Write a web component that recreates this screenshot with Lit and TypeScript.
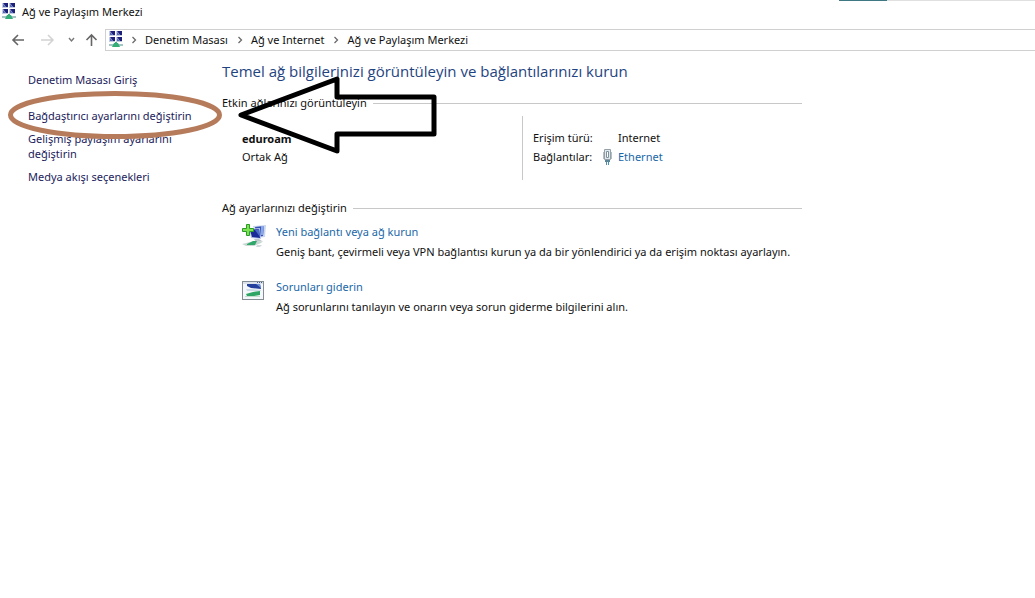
import { LitElement, html, css, svg } from "lit";
import { customElement } from "lit/decorators.js";

const networkIcon = html`<svg class="net" width="16" height="18" viewBox="0 0 16 18" aria-hidden="true">
  ${[[1, 0], [8, 0], [1, 6], [8, 6]].map(
    ([x, y]) => svg`<rect x=${x} y=${y} width="6" height="5" fill="#c3cbe2"/>
      <path d="M${x + 1} ${y}h5v4h-2z" fill="#1d2079"/><path d="M${x + 1} ${y + 1}l3 3h-3z" fill="#5468b4"/>`
  )}
  <path d="M7 11h2v2H7z" fill="#46a884"/>
  <path d="M1 13h14v2H1z" fill="#a3c6c2"/>
  <path d="M6 12h4l2 4H4z" fill="#35ad78"/>
</svg>`;

const newConnectionIcon = html`<svg width="24" height="26" viewBox="0 0 24 26" aria-hidden="true">
  <path d="M11 3l13-1-1 12-8 1z" fill="#cbd7ee"/>
  <path d="M13 4l9-1-1 10-6 1z" fill="#3650b5"/>
  <path d="M19 3l3 0-1 9-2 0z" fill="#8ba8e6"/>
  <path d="M7 6l11-1 1 11-10-1z" fill="#b9c7e8"/>
  <path d="M8 7l9-1 1 9-8-1z" fill="#1a2b98"/>
  <path d="M13 7l4-1 1 8z" fill="#4a6bca"/>
  <path d="M12 16l5 0 3 2-6 1z" fill="#bcc5cc"/>
  <path d="M0 21l8-2 13-1-2 2-7 3-8 0z" fill="#c9d7d2"/>
  <path d="M5 21l6-3 4 0-2 4-8 0z" fill="#30a86b"/>
  <path d="M15 22l5 0-2 2h-4z" fill="#d3d9de"/>
  <path d="M4.500 1.500h3v4h4v3h-4v4h-3v-4h-4v-3h4z" fill="#7ee255" stroke="#2c9a26"/>
</svg>`;

const troubleshootIcon = html`<svg width="24" height="20" viewBox="0 0 24 20" aria-hidden="true">
  <rect x="0.500" y="0.500" width="21" height="18" fill="#f5f8fa" stroke="#858d94"/>
  <path d="M1 1h20v2H1z" fill="#dbe2ea"/>
  <path d="M15 1h1v1h-1zM17 1h1v1h-1zM19 1h1v1h-1z" fill="#4a5a8c"/>
  <path d="M5 3h13l1 5-10-1-4-2z" fill="#24409c"/>
  <path d="M14 3h4l1 4z" fill="#6f91d8"/>
  <path d="M4 8l5 0 10 1v1H5z" fill="#cfdbe8"/>
  <path d="M4 13l7-2 7-1 0 4-6 1-7 0z" fill="#2fa565"/>
  <path d="M3 15h15v1H3z" fill="#c4ddd0"/>
</svg>`;

const ethernetIcon = html`<svg width="9" height="16" viewBox="0 0 9 16" aria-hidden="true">
  <path d="M1.500 0.500h6v10h-6z" fill="#dfe8ec" stroke="#94a1a8"/>
  <path d="M0 3h1v7H0zM8 3h1v7H8z" fill="#b4bfc4"/>
  <path d="M3.500 2.500h2v6h-2z" fill="#fff" stroke="#7d919b"/>
  <path d="M2 11h5v2H2z" fill="#5b8699"/>
  <path d="M3 13h1v3H3zM5 13h1v3H5z" fill="#4b90ad"/>
</svg>`;

const chevron = html`<svg class="chevron" width="6" height="8" viewBox="0 0 6 8" aria-hidden="true">
  <path d="M1.500 1l3 3-3 3" fill="none" stroke="#6a6a6a" stroke-width="1.300"/>
</svg>`;

@customElement("app-root")
export class AppRoot extends LitElement {
  static styles = css`
    :host {
      display: block;
      position: relative;
      min-height: 100vh;
      overflow: hidden;
      background: #fff;
      color: #111;
      font: 11px/16px "Noto Sans", "Open Sans", sans-serif;
    }
    * { box-sizing: border-box; }
    svg { display: block; flex: none; }
    a { color: inherit; text-decoration: none; }
    a:hover { text-decoration: underline; }
    h1, h2, p, dl, dd, dt, ul, ol { margin: 0; padding: 0; font: inherit; list-style: none; }
    .edge {
      position: absolute;
      top: 0;
      right: 0;
      width: 196px;
      height: 1px;
      background: #e0e0e0;
    }
    .edge::before { content: ""; display: block; width: 48px; height: 1px; background: #3f7783; }
    .titlebar { display: flex; align-items: center; gap: 5px; height: 24px; padding-left: 1px; }
    .nav { display: flex; height: 32px; padding-top: 5px; }
    .buttons { display: flex; align-items: center; width: 105px; height: 22px; padding-left: 11px; }
    button { border: 0; padding: 0; background: none; display: grid; place-items: center; height: 22px; }
    .wide { width: 15px; }
    .fwd { margin-left: 14px; }
    .drop { width: 9px; margin-left: 12px; }
    .up { margin-left: 8px; }
    .address {
      display: flex;
      flex: 1;
      align-items: center;
      height: 22px;
      padding-left: 2px;
      border: 1px solid #d0d0d0;
      border-right: 0;
    }
    .crumbs, .crumb { display: flex; align-items: center; }
    .crumbs { gap: 2px; }
    .chevron { margin: 0 8px 0 7px; }
    .page { display: grid; grid-template-columns: 222px minmax(0, 580px); padding-top: 4px; }
    .side { padding: 12px 24px 0 28px; color: #1c1c5c; line-height: 15px; }
    .side ul { display: grid; gap: 8px; }
    .home { padding-bottom: 13px; }
    h1 { color: #1f4480; font: 15px/22px "Open Sans", "Noto Sans", sans-serif; }
    h2 { display: flex; align-items: center; gap: 6px; }
    h2::after { content: ""; flex: 1; height: 1px; background: #c8c8c8; }
    .first { margin-top: 13px; }
    .network { display: grid; grid-template-columns: 300px 1fr; margin: 5px 0 20px; height: 64px; }
    .name { padding: 14px 0 0 20px; line-height: 18px; }
    .name strong { display: block; }
    .details { padding: 12px 0 0 10px; border-left: 1px solid #c8c8c8; }
    .row { display: grid; grid-template-columns: 70px 15px 1fr; line-height: 19px; align-items: center; }
    .row dd { grid-column: 3; }
    .row .linked { grid-column: 2 / 4; display: flex; gap: 6px; align-items: center; }
    .link { color: #1a67a8; }
    .tasks { display: grid; gap: 15px; padding: 6px 0 0 20px; }
    .task { display: grid; grid-template-columns: 34px 1fr; line-height: 20px; }
    .art { height: 26px; padding-top: 1px; }
    .art.low { padding-top: 4px; }
    .marks { position: absolute; top: 0; left: 0; pointer-events: none; }
  `;

  render() {
    return html`
      <div class="edge"></div>
      <header class="titlebar">${networkIcon}<span>Ağ ve Paylaşım Merkezi</span></header>
      <nav class="nav">
        <div class="buttons">
          <button class="wide" aria-label="Geri">
            <svg width="15" height="12" viewBox="0 0 15 12"><path d="M13 6H2M7 1L2 6l5 5" fill="none" stroke="#666" stroke-width="1.600"/></svg>
          </button>
          <button class="wide fwd" aria-label="İleri" disabled>
            <svg width="15" height="12" viewBox="0 0 15 12"><path d="M1 6h11M8 1l5 5-5 5" fill="none" stroke="#d2d2d2" stroke-width="1.500"/></svg>
          </button>
          <button class="drop" aria-label="Son konumlar">
            <svg width="9" height="6" viewBox="0 0 9 6"><path d="M2 1l2.500 3L7 1" fill="none" stroke="#777" stroke-width="1.400"/></svg>
          </button>
          <button class="wide up" aria-label="Yukarı">
            <svg width="13" height="14" viewBox="0 0 13 14"><path d="M6.500 13V2M1.500 7l5-5 5 5" fill="none" stroke="#666" stroke-width="1.600"/></svg>
          </button>
        </div>
        <div class="address">
          ${networkIcon}
          <ol class="crumbs">
            ${["Denetim Masası", "Ağ ve Internet", "Ağ ve Paylaşım Merkezi"].map(
              (name) => html`<li class="crumb">${chevron}<a href="#">${name}</a></li>`
            )}
          </ol>
        </div>
      </nav>
      <div class="page">
        <aside class="side">
          <ul>
            <li class="home"><a href="#">Denetim Masası Giriş</a></li>
            <li><a href="#">Bağdaştırıcı ayarlarını değiştirin</a></li>
            <li><a href="#">Gelişmiş paylaşım ayarlarını değiştirin</a></li>
            <li><a href="#">Medya akışı seçenekleri</a></li>
          </ul>
        </aside>
        <main>
          <h1>Temel ağ bilgilerinizi görüntüleyin ve bağlantılarınızı kurun</h1>
          <h2 class="first">Etkin ağlarınızı görüntüleyin</h2>
          <section class="network">
            <div class="name"><strong>eduroam</strong>Ortak Ağ</div>
            <dl class="details">
              <div class="row"><dt>Erişim türü:</dt><dd>Internet</dd></div>
              <div class="row"><dt>Bağlantılar:</dt><dd class="linked">${ethernetIcon}<a class="link" href="#">Ethernet</a></dd></div>
            </dl>
          </section>
          <h2>Ağ ayarlarınızı değiştirin</h2>
          <div class="tasks">
            <section class="task">
              <div class="art">${newConnectionIcon}</div>
              <div>
                <a class="link" href="#">Yeni bağlantı veya ağ kurun</a>
                <p>Geniş bant, çevirmeli veya VPN bağlantısı kurun ya da bir yönlendirici ya da erişim noktası ayarlayın.</p>
              </div>
            </section>
            <section class="task">
              <div class="art low">${troubleshootIcon}</div>
              <div>
                <a class="link" href="#">Sorunları giderin</a>
                <p>Ağ sorunlarını tanılayın ve onarın veya sorun giderme bilgilerini alın.</p>
              </div>
            </section>
          </div>
        </main>
      </div>
      <svg class="marks" width="440" height="160" viewBox="0 0 440 160" aria-hidden="true">
        <ellipse cx="115" cy="115" rx="104.500" ry="21.500" fill="none" stroke="#b57b5b" stroke-width="5"/>
        <path d="M241 115L337 79V97H434V134H337V151Z" fill="none" stroke="#000" stroke-width="5" stroke-linejoin="round"/>
      </svg>
    `;
  }
}
